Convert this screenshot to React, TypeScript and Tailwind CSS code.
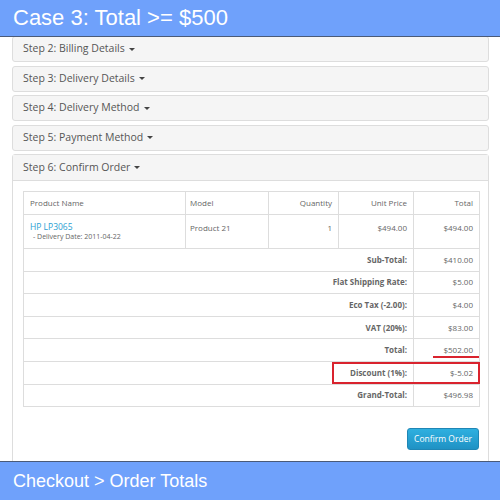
import React from 'react';

const steps = ['Step 2: Billing Details', 'Step 3: Delivery Details', 'Step 4: Delivery Method', 'Step 5: Payment Method'];

const totals = [
  { label: 'Sub-Total:', value: '$410.00' },
  { label: 'Flat Shipping Rate:', value: '$5.00' },
  { label: 'Eco Tax (-2.00):', value: '$4.00' },
  { label: 'VAT (20%):', value: '$83.00' },
  { label: 'Total:', value: '$502.00', underline: true },
  { label: 'Discount (1%):', value: '$-5.02', boxed: true },
  { label: 'Grand-Total:', value: '$496.98' },
];

function Caret() {
  return <span className="inline-block ml-[4px] align-middle w-0 h-0 border-l-[3px] border-r-[3px] border-t-[3px] border-l-transparent border-r-transparent border-t-[#444]" />;
}

function StepHeading({ title }: { title: string }) {
  return (
    <div className="h-[26px] shrink-0 flex items-center px-[10px] bg-[#f5f5f5] border border-[#dddddd] rounded-[3px] text-[10.5px] text-[#555]">
      <span>{title}</span>
      <Caret />
    </div>
  );
}

export default function App() {
  return (
    <div className="w-[500px] h-[500px] flex flex-col overflow-hidden bg-white font-['Open_Sans',sans-serif]">
      {/* top banner */}
      <div className="h-[37px] shrink-0 bg-[#6fa1fb] border-b border-[#4a5a78] flex items-center px-[13px] z-10">
        <span className="text-white text-[22px] font-['Liberation_Sans',Arial,sans-serif] leading-none">Case 3: Total &gt;= $500</span>
      </div>

      <div className="flex-1 overflow-hidden px-[12px] mt-[-1px]">
        <div className="flex flex-col gap-[3.5px] w-[477px]">
          {steps.map((s) => (
            <StepHeading key={s} title={s} />
          ))}

          <div className="border border-[#dddddd] rounded-[3px]">
            <div className="h-[26px] flex items-center px-[10px] bg-[#f5f5f5] border-b border-[#dddddd] text-[10.5px] text-[#555]">
              <span>Step 6: Confirm Order</span>
              <Caret />
            </div>
            <div className="pl-[10px] pr-[9px] py-[10px]">
              <table className="w-[456px] border-collapse table-fixed text-[8px] text-[#666]">
                <colgroup>
                  <col className="w-[162px]" />
                  <col className="w-[83px]" />
                  <col className="w-[70px]" />
                  <col className="w-[75px]" />
                  <col className="w-[66px]" />
                </colgroup>
                <thead>
                  <tr className="h-[23px]">
                    <td className="border border-[#dddddd] px-[6px] text-left">Product Name</td>
                    <td className="border border-[#dddddd] px-[4px] text-left">Model</td>
                    <td className="border border-[#dddddd] px-[6px] text-right">Quantity</td>
                    <td className="border border-[#dddddd] px-[6px] text-right">Unit Price</td>
                    <td className="border border-[#dddddd] px-[6px] text-right">Total</td>
                  </tr>
                </thead>
                <tbody>
                  <tr className="h-[34px] align-top">
                    <td className="border border-[#dddddd] px-[6px] pt-[6px]">
                      <div className="text-[8.5px] text-[#2aa0d2] leading-[11px]">HP LP3065</div>
                      <div className="text-[7px] text-[#666] pl-[3px] leading-[10px]">- Delivery Date: 2011-04-22</div>
                    </td>
                    <td className="border border-[#dddddd] px-[4px] pt-[7px] text-[8px]">Product 21</td>
                    <td className="border border-[#dddddd] px-[6px] pt-[7px] text-right">1</td>
                    <td className="border border-[#dddddd] px-[6px] pt-[7px] text-right">$494.00</td>
                    <td className="border border-[#dddddd] px-[6px] pt-[7px] text-right">$494.00</td>
                  </tr>
                  {totals.map((t) => (
                    <tr key={t.label} className="h-[22.6px]">
                      <td colSpan={4} className="border border-[#dddddd] px-[6px] text-right font-bold text-[#666]">
                        {t.label}
                      </td>
                      <td className="relative border border-[#dddddd] px-[6px] text-right">
                        {t.value}
                        {t.underline && <span className="absolute left-[19px] right-0 bottom-[3px] h-[2px] bg-[#d9232e]" />}
                        {t.boxed && <span className="absolute left-[-82px] right-[-1px] top-0 bottom-0 border-2 border-[#d9232e]" />}
                      </td>
                    </tr>
                  ))}
                </tbody>
              </table>
              <div className="flex justify-end mt-[21px]">
                <button className="h-[22px] w-[72px] rounded-[3px] bg-gradient-to-b from-[#2fb0e0] to-[#1f92c4] border border-[#1f86b5] text-white text-[8.5px]">
                  Confirm Order
                </button>
              </div>
              <div className="h-[20px]" />
            </div>
          </div>
        </div>
      </div>

      {/* bottom banner */}
      <div className="h-[39px] shrink-0 bg-[#6fa1fb] border-t border-[#4a5a78] flex items-center px-[13px] z-10">
        <span className="text-white text-[18px] font-['Liberation_Sans',Arial,sans-serif] leading-none">Checkout &gt; Order Totals</span>
      </div>
    </div>
  );
}
